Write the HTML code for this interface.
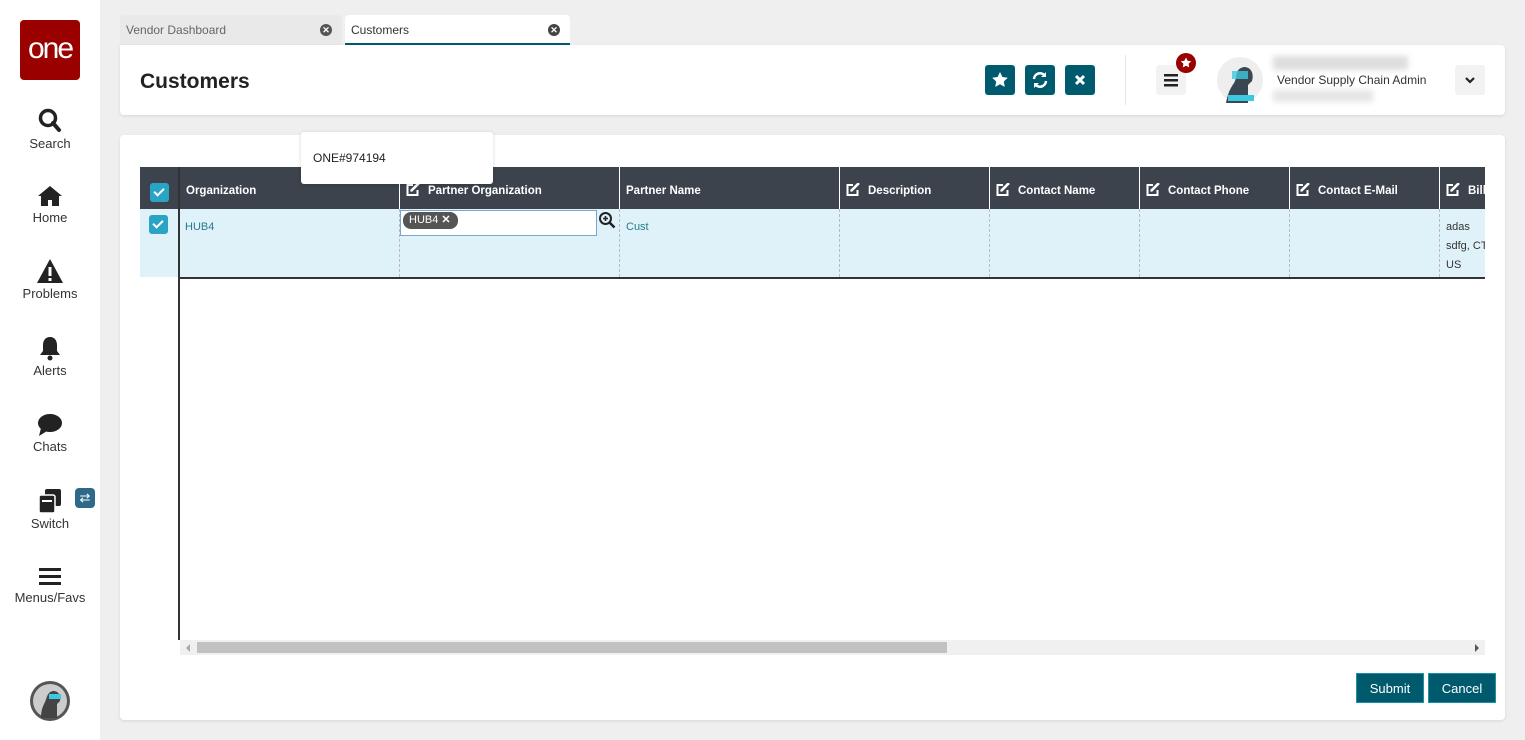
<!DOCTYPE html>
<html><head><meta charset="utf-8"><style>
*{box-sizing:border-box;margin:0;padding:0}
body{width:1525px;height:740px;overflow:hidden;background:#efefef;font-family:"Liberation Sans",sans-serif;position:relative;color:#333}
.abs{position:absolute}
.side{left:0;top:0;width:100px;height:740px;background:#fff}
.nav{position:absolute;left:0;width:100px;text-align:center;font-size:13px;color:#333}
.nav svg{display:block;margin:0 auto 2px}
.tab{top:15px;height:30px;font-size:12px;line-height:30px;padding-left:6px;border-radius:4px 4px 0 0}
.x{position:absolute;right:10px;top:9px;width:12px;height:12px;border-radius:50%;background:#444;color:#fff;font-size:9px;line-height:12px;text-align:center;font-weight:bold}
.btn{top:65px;width:30px;height:30px;background:#005a6e;border-radius:3px}
.th{position:absolute;top:167px;height:42px;background:#3c434d;color:#fff;font-weight:bold;font-size:11.5px;line-height:48px;padding-left:6px;border-left:1px solid #fff;white-space:nowrap;overflow:hidden}
.td{position:absolute;top:209px;height:68px;border-left:1px dashed #bbb;font-size:11px;padding:9px 6px;color:#2a7a8c;line-height:19px;overflow:hidden;white-space:nowrap}
.ed{display:inline-block;vertical-align:-2px;margin-right:8px}
.cb{position:absolute;width:19px;height:19px;background:#2aa4c4;border-radius:3px}
.cb:after{content:"";position:absolute;left:6px;top:3px;width:4px;height:8px;border:solid #fff;border-width:0 2px 2px 0;transform:rotate(45deg)}
.fb{top:673px;height:30px;background:#005a6e;color:#fff;font-size:13px;line-height:30px;text-align:center;border:1px solid #1b8ea8}
</style></head><body>
<div class="abs side"></div>
<div class="abs" style="left:20px;top:20px;width:60px;height:60px;background:#9b0000;border-radius:4px;color:#fff;font-size:30px;line-height:58px;text-align:center;letter-spacing:-2px">one</div>
<div class="nav" style="top:108px"><svg width="24" height="26" viewBox="0 0 24 26"><circle cx="10" cy="10" r="7.5" fill="none" stroke="#222" stroke-width="3.5"/><path d="M15 15l6 7" stroke="#222" stroke-width="4" stroke-linecap="round"/></svg>Search</div>
<div class="nav" style="top:184px"><svg width="26" height="24" viewBox="0 0 26 24"><path d="M13 2L1 12h3v10h7v-6h4v6h7V12h3z" fill="#222"/></svg>Home</div>
<div class="nav" style="top:258px"><svg width="28" height="26" viewBox="0 0 28 26"><path d="M14 1L1 25h26z" fill="#222"/><rect x="12.5" y="9" width="3" height="9" fill="#fff"/><rect x="12.5" y="20" width="3" height="3" fill="#fff"/></svg>Problems</div>
<div class="nav" style="top:335px"><svg width="24" height="26" viewBox="0 0 24 26"><path d="M12 2c-5 0-7 4-7 8v6l-3 4h20l-3-4v-6c0-4-2-8-7-8z" fill="#222"/><circle cx="12" cy="23" r="2.5" fill="#222"/></svg>Alerts</div>
<div class="nav" style="top:413px"><svg width="26" height="24" viewBox="0 0 26 24"><ellipse cx="13" cy="10" rx="12" ry="9" fill="#222"/><path d="M4 15l-2 8 8-5z" fill="#222"/></svg>Chats</div>
<div class="nav" style="top:488px"><svg width="26" height="26" viewBox="0 0 26 26"><rect x="8" y="1" width="16" height="17" rx="2" fill="#222"/><rect x="2" y="7" width="16" height="18" rx="2" fill="#222" stroke="#fff" stroke-width="1.5"/><rect x="5" y="12" width="10" height="2" fill="#fff"/></svg>Switch</div>
<div class="abs" style="left:75px;top:488px;width:20px;height:20px;background:#2d6a8a;border-radius:4px;color:#fff;font-size:13px;line-height:20px;text-align:center">⇄</div>
<div class="nav" style="top:566px"><svg width="24" height="22" viewBox="0 0 24 22"><rect x="1" y="2" width="22" height="3" fill="#222"/><rect x="1" y="9" width="22" height="3" fill="#222"/><rect x="1" y="16" width="22" height="3" fill="#222"/></svg>Menus/Favs</div>
<svg class="abs" style="left:29px;top:680px" width="42" height="42" viewBox="0 0 42 42"><circle cx="21" cy="21" r="20" fill="#555"/><circle cx="21" cy="21" r="17" fill="#ccc"/><path d="M12 38c0-8 2-12 4-16s2-10 8-11c6 0 8 5 7 10l-3 3v14z" fill="#444"/><rect x="20" y="14" width="12" height="5" fill="#3cc8e0"/></svg>

<div class="abs tab" style="left:120px;width:222px;background:#e9e9e9;color:#666">Vendor Dashboard<span class="x" style="background:#555">✕</span></div>
<div class="abs tab" style="left:345px;width:225px;background:#fff;color:#333;border-bottom:2px solid #005a6e">Customers<span class="x">✕</span></div>

<div class="abs" style="left:120px;top:45px;width:1385px;height:70px;background:#fff;border-radius:0 4px 4px 4px;box-shadow:0 1px 3px rgba(0,0,0,.1)"></div>
<div class="abs" style="left:140px;top:70px;font-size:21px;font-weight:bold;color:#222">Customers</div>
<div class="abs btn" style="left:985px"><svg width="30" height="30" viewBox="0 0 30 30"><path d="M15 7l2.4 5 5.4.7-4 3.8 1 5.4-4.8-2.6-4.8 2.6 1-5.4-4-3.8 5.4-.7z" fill="#fff"/></svg></div>
<div class="abs btn" style="left:1025px"><svg width="30" height="30" viewBox="0 0 30 30"><path d="M9 14a6 6 0 0 1 11-3M21 16a6 6 0 0 1-11 3" fill="none" stroke="#fff" stroke-width="2.5"/><path d="M21 7v5h-5zM9 23v-5h5z" fill="#fff"/></svg></div>
<div class="abs btn" style="left:1065px"><svg width="30" height="30" viewBox="0 0 30 30"><path d="M11 11l8 8M19 11l-8 8" stroke="#fff" stroke-width="3"/></svg></div>
<div class="abs" style="left:1125px;top:55px;width:1px;height:50px;background:#e5e5e5"></div>
<div class="abs" style="left:1156px;top:65px;width:30px;height:30px;background:#f2f2f2;border-radius:3px"><svg width="30" height="30" viewBox="0 0 30 30"><rect x="8" y="9" width="14" height="2.5" fill="#222"/><rect x="8" y="14" width="14" height="2.5" fill="#222"/><rect x="8" y="19" width="14" height="2.5" fill="#222"/></svg></div>
<div class="abs" style="left:1176px;top:53px;width:20px;height:20px;border-radius:50%;background:#9b0000"><svg width="20" height="20" viewBox="0 0 20 20"><path d="M10 4.5l1.6 3.3 3.6.5-2.6 2.5.6 3.6-3.2-1.7-3.2 1.7.6-3.6-2.6-2.5 3.6-.5z" fill="#fff"/></svg></div>
<svg class="abs" style="left:1216px;top:55px" width="48" height="50" viewBox="0 0 48 50"><circle cx="24" cy="25" r="23" fill="#eee"/><path d="M10 48c2-10 4-14 8-20s0-14 10-16c8 0 10 8 8 14l-4 4v18z" fill="#3a4650"/><rect x="16" y="16" width="16" height="8" fill="#3cc8e0" opacity=".8"/><rect x="12" y="40" width="26" height="6" fill="#3cc8e0"/></svg>
<div class="abs" style="left:1273px;top:56px;width:135px;height:14px;background:#ddd;filter:blur(3px)"></div>
<div class="abs" style="left:1277px;top:73px;font-size:12px;color:#333">Vendor Supply Chain Admin</div>
<div class="abs" style="left:1273px;top:90px;width:100px;height:12px;background:#e6e6e6;filter:blur(3px)"></div>
<div class="abs" style="left:1455px;top:65px;width:30px;height:30px;background:#f2f2f2;border-radius:3px"><svg width="30" height="30" viewBox="0 0 30 30"><path d="M11 13l4 4 4-4" fill="none" stroke="#222" stroke-width="2.2"/></svg></div>

<div class="abs" style="left:120px;top:135px;width:1385px;height:585px;background:#fff;border-radius:4px;box-shadow:0 1px 3px rgba(0,0,0,.1)"></div>

<div class="th" style="left:140px;width:40px;border-left:none"></div>
<div class="cb" style="left:150px;top:183px"></div>
<div class="th" style="left:179px;width:220px">Organization</div>
<div class="th" style="left:399px;width:220px"><svg class="ed" width="14" height="13" viewBox="0 0 14 13"><path d="M7 2H1.5v10h10V7" fill="none" stroke="#fff" stroke-width="2"/><path d="M5 8l1 0 7-7-1-1-7 7z" fill="#fff" stroke="#fff" stroke-width="1.2"/></svg>Partner Organization</div>
<div class="th" style="left:619px;width:220px">Partner Name</div>
<div class="th" style="left:839px;width:150px"><svg class="ed" width="14" height="13" viewBox="0 0 14 13"><path d="M7 2H1.5v10h10V7" fill="none" stroke="#fff" stroke-width="2"/><path d="M5 8l1 0 7-7-1-1-7 7z" fill="#fff" stroke="#fff" stroke-width="1.2"/></svg>Description</div>
<div class="th" style="left:989px;width:150px"><svg class="ed" width="14" height="13" viewBox="0 0 14 13"><path d="M7 2H1.5v10h10V7" fill="none" stroke="#fff" stroke-width="2"/><path d="M5 8l1 0 7-7-1-1-7 7z" fill="#fff" stroke="#fff" stroke-width="1.2"/></svg>Contact Name</div>
<div class="th" style="left:1139px;width:150px"><svg class="ed" width="14" height="13" viewBox="0 0 14 13"><path d="M7 2H1.5v10h10V7" fill="none" stroke="#fff" stroke-width="2"/><path d="M5 8l1 0 7-7-1-1-7 7z" fill="#fff" stroke="#fff" stroke-width="1.2"/></svg>Contact Phone</div>
<div class="th" style="left:1289px;width:150px"><svg class="ed" width="14" height="13" viewBox="0 0 14 13"><path d="M7 2H1.5v10h10V7" fill="none" stroke="#fff" stroke-width="2"/><path d="M5 8l1 0 7-7-1-1-7 7z" fill="#fff" stroke="#fff" stroke-width="1.2"/></svg>Contact E-Mail</div>
<div class="th" style="left:1439px;width:46px"><svg class="ed" width="14" height="13" viewBox="0 0 14 13"><path d="M7 2H1.5v10h10V7" fill="none" stroke="#fff" stroke-width="2"/><path d="M5 8l1 0 7-7-1-1-7 7z" fill="#fff" stroke="#fff" stroke-width="1.2"/></svg>Billi</div>

<div class="abs" style="left:140px;top:209px;width:1345px;height:68px;background:#dff1f9"></div>
<div class="abs" style="left:179px;top:277px;width:1306px;height:2px;background:#333"></div>
<div class="abs" style="left:178px;top:167px;width:2px;height:473px;background:#333"></div>
<div class="cb" style="left:149px;top:215px"></div>
<div class="td" style="left:179px;width:220px;border-left:none">HUB4</div>
<div class="td" style="left:399px;width:220px"></div>
<div class="td" style="left:619px;width:220px">Cust</div>
<div class="td" style="left:839px;width:150px"></div>
<div class="td" style="left:989px;width:150px"></div>
<div class="td" style="left:1139px;width:150px"></div>
<div class="td" style="left:1289px;width:150px"></div>
<div class="td" style="left:1439px;width:46px;color:#333">adas<br>sdfg, CT<br>US</div>
<div class="abs" style="left:400px;top:210px;width:197px;height:26px;background:#fff;border:1px solid #7aa6cc"></div>
<div class="abs" style="left:403px;top:212px;width:55px;height:17px;background:#555;border-radius:8px;color:#fff;font-size:11px;line-height:17px;padding-left:6px">HUB4 <b>✕</b></div>
<svg class="abs" style="left:598px;top:211px" width="18" height="18" viewBox="0 0 18 18"><circle cx="7.5" cy="7.5" r="5.5" fill="none" stroke="#222" stroke-width="2"/><path d="M11.5 11.5l5 5" stroke="#222" stroke-width="2.6"/><path d="M5 7.5h5M7.5 5v5" stroke="#222" stroke-width="1.6"/></svg>

<div class="abs" style="left:301px;top:132px;width:192px;height:52px;background:#fff;border-radius:3px;box-shadow:0 1px 4px rgba(0,0,0,.15);font-size:12px;color:#222;padding:19px 12px">ONE#974194</div>

<div class="abs" style="left:180px;top:640px;width:1305px;height:15px;background:#f0f0f0"></div>
<div class="abs" style="left:197px;top:642px;width:750px;height:11px;background:#c1c1c1"></div>
<div class="abs" style="left:186px;top:644px;width:0;height:0;border:4px solid transparent;border-right-color:#aaa;border-left:none"></div>
<div class="abs" style="left:1475px;top:644px;width:0;height:0;border:4px solid transparent;border-left-color:#555;border-right:none"></div>

<div class="abs fb" style="left:1356px;width:68px">Submit</div>
<div class="abs fb" style="left:1428px;width:68px">Cancel</div>
</body></html>
